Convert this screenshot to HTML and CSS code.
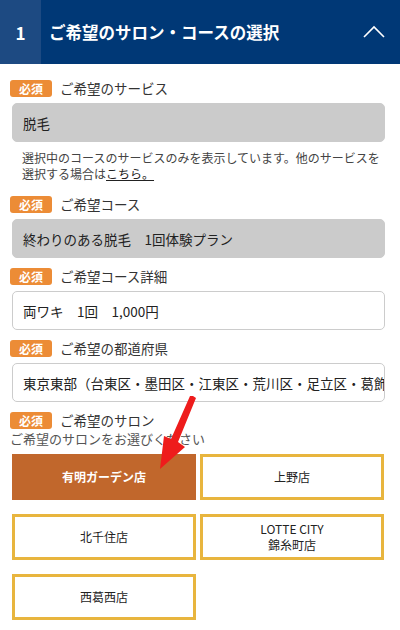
FILE: index.html
```html
<!DOCTYPE html>
<html lang="ja">
<head>
    <meta charset="UTF-8">
    <meta name="viewport" content="width=device-width, initial-scale=1.0">
    <title>ご希望のサロン・コースの選択</title>
    <link rel="stylesheet" href="styles.css">
</head>
<body>
    <div class="step-head">
        <div class="step-num">1</div>
        <div class="step-title">ご希望のサロン・コースの選択</div>
        <svg class="chevron" width="22" height="14" viewBox="0 0 22 14">
            <polyline points="1,12 11,2 21,12" fill="none" stroke="#fff" stroke-width="1.6"/>
        </svg>
    </div>
    <div class="form">
        <div class="field">
            <div class="label"><span class="badge">必須</span>ご希望のサービス</div>
            <div class="box box-fixed">脱毛</div>
            <p class="note">選択中のコースのサービスのみを表示しています。他のサービスを<br>選択する場合は<a href="#">こちら。</a></p>
        </div>
        <div class="field">
            <div class="label"><span class="badge">必須</span>ご希望コース</div>
            <div class="box box-fixed">終わりのある脱毛　1回体験プラン</div>
        </div>
        <div class="field">
            <div class="label"><span class="badge">必須</span>ご希望コース詳細</div>
            <div class="box">両ワキ　1回　1,000円</div>
        </div>
        <div class="field">
            <div class="label"><span class="badge">必須</span>ご希望の都道府県</div>
            <div class="box">東京東部（台東区・墨田区・江東区・荒川区・足立区・葛飾区）</div>
        </div>
        <div class="field salon-field">
            <div class="label"><span class="badge">必須</span>ご希望のサロン</div>
            <p class="hint">ご希望のサロンをお選びください</p>
            <div class="salons">
                <button class="salon active">有明ガーデン店</button>
                <button class="salon">上野店</button>
                <button class="salon">北千住店</button>
                <button class="salon">LOTTE CITY<br>錦糸町店</button>
                <button class="salon">西葛西店</button>
            </div>
            <svg class="arrow" width="50" height="80" viewBox="0 0 50 80">
                <polygon points="38,0 41,2 23,46 30,51 5,73 9,40 16,43 35,0" fill="#ee1c1c"/>
            </svg>
        </div>
    </div>
</body>
</html>
```

FILE: styles.css
```css
body {
    margin: 0;
    font-family: "Noto Sans CJK JP", "Liberation Sans", sans-serif;
    color: #333;
    background: #fff;
}
.step-head {
    display: flex;
    align-items: center;
    height: 64px;
    background: #003876;
    color: #fff;
}
.step-num {
    width: 41px;
    height: 100%;
    display: flex;
    align-items: center;
    justify-content: center;
    background: #1d4a82;
    font-size: 17px;
    font-weight: bold;
}
.step-title {
    flex: 1;
    padding-left: 8px;
    font-size: 16.5px;
    font-weight: bold;
}
.chevron {
    margin-right: 15px;
}
.form {
    padding: 15px 15px 0 12px;
}
.field {
    margin-bottom: 9px;
}
.label {
    display: flex;
    align-items: center;
    height: 18px;
    font-size: 13.5px;
    color: #333;
    margin-left: -2px;
}
.badge {
    display: inline-block;
    background: #ec8c36;
    color: #fff;
    font-size: 12px;
    font-weight: bold;
    line-height: 17px;
    padding: 0 9px;
    border-radius: 3px;
    margin-right: 8px;
}
.box {
    margin-top: 6px;
    height: 39px;
    box-sizing: border-box;
    border: 1px solid #ccc;
    border-radius: 5px;
    padding: 0 10px;
    display: flex;
    align-items: center;
    font-size: 13.5px;
    color: #222;
    white-space: nowrap;
    overflow: hidden;
}
.box-fixed {
    background: #cbcbcb;
    border-color: #cbcbcb;
}
.note {
    margin: 8px 0 0 10px;
    padding-bottom: 4px;
    font-size: 12px;
    line-height: 16px;
    color: #444;
}
.note a {
    color: #222;
}
.hint {
    margin: 1px 0 0 -2px;
    font-size: 13px;
    line-height: 17px;
    color: #555;
}
.salon-field {
    position: relative;
}
.salons {
    margin-top: 7px;
    display: grid;
    grid-template-columns: 184px 184px;
    column-gap: 4px;
    row-gap: 14px;
}
.salon {
    height: 46px;
    background: #fff;
    border: 3px solid #e8b53e;
    font-family: inherit;
    font-size: 12px;
    line-height: 16px;
    color: #222;
    padding: 0;
}
.salon.active {
    background: #c1672c;
    border-color: #c1672c;
    color: #fff;
    font-weight: bold;
}
.arrow {
    position: absolute;
    left: 143px;
    top: -15px;
}
```
